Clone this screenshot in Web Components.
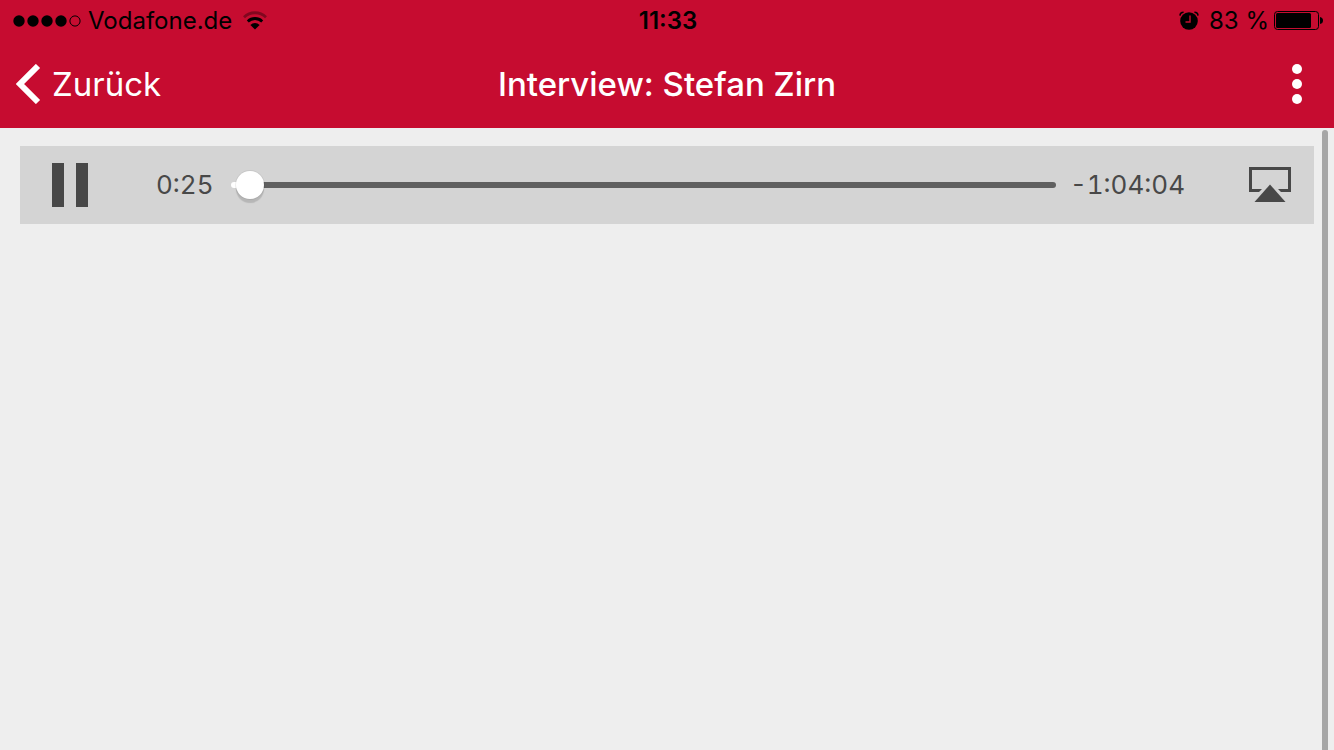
<!DOCTYPE html>
<html lang="de">
<head>
<meta charset="utf-8">
<meta name="viewport" content="width=device-width, initial-scale=1">
<title>Interview: Stefan Zirn</title>
<style>
  html, body {
    height: 100%;
    margin: 0;
  }

  body {
    background: #eee;
    font-family: Inter, "Liberation Sans", sans-serif;
  }
</style>
</head>
<body>
<app-screen>
  <status-bar slot="header" carrier="Vodafone.de" time="11:33" battery="83" signal="4"></status-bar>
  <nav-bar slot="header" back="Zurück">Interview: Stefan Zirn</nav-bar>
  <audio-player position="25" duration="3869"></audio-player>
</app-screen>

<script>
class AppScreen extends HTMLElement {
  constructor() {
    super();
    this.attachShadow({ mode: 'open' });
    this.shadowRoot.innerHTML = `
      <style>
        :host {
          display: flex;
          flex-direction: column;
          height: 100%;
        }

        header {
          background: #c60c30;
        }

        main {
          position: relative;
          flex: 1;
          padding: 18px 20px;
        }

        .scroll-indicator {
          position: absolute;
          top: 2px;
          right: 6px;
          bottom: 0;
          width: 6px;
          border-radius: 3px 3px 0 0;
          background: #a6a6a6;
        }
      </style>

      <header><slot name="header"></slot></header>
      <main>
        <slot></slot>
        <div class="scroll-indicator"></div>
      </main>
    `;
  }
}

/**
 * StatusBar - signal, carrier, clock and battery
 */
class StatusBar extends HTMLElement {
  constructor() {
    super();
    this.attachShadow({ mode: 'open' });
  }

  connectedCallback() {
    const signal = Number(this.getAttribute('signal'));
    const battery = Number(this.getAttribute('battery'));

    let dots = '';
    for (let i = 0; i < 5; i++) {
      const cx = 6 + i * 14;
      dots += i < signal
        ? `<circle cx="${cx}" cy="6" r="5.7"/>`
        : `<circle cx="${cx}" cy="6" r="5.1" fill="none" stroke="#000" stroke-width="1"/>`;
    }

    this.shadowRoot.innerHTML = `
      <style>
        :host {
          display: grid;
          grid-template-columns: 1fr auto 1fr;
          align-items: center;
          height: 42px;
          padding: 0 11px 0 13px;
          color: #000;
          font-size: 24px;
          line-height: 42px;
        }

        svg {
          display: block;
        }

        .left, .right {
          display: flex;
          align-items: center;
        }

        .left {
          gap: 7px;
        }

        .right {
          justify-content: flex-end;
          gap: 5px;
        }

        .wifi {
          margin-left: 4px;
        }

        .alarm {
          margin-right: 5px;
        }

        .time {
          font-weight: 600;
        }
      </style>

      <div class="left">
        <svg width="68" height="12" viewBox="0 0 68 12">${dots}</svg>
        <span>${this.getAttribute('carrier')}</span>
        <svg class="wifi" width="24" height="20" viewBox="0 0 24 20">
          <g fill="none" stroke="#000" stroke-width="2.8">
            <path d="M1 6.2a15.8 15.8 0 0 1 22 0" stroke-opacity=".35"/>
            <path d="M4.8 10.4a10.4 10.4 0 0 1 14.4 0"/>
          </g>
          <path d="M12 18.5l-4.6-4.6a6.6 6.6 0 0 1 9.2 0z"/>
        </svg>
      </div>
      <span class="time">${this.getAttribute('time')}</span>
      <div class="right">
        <svg class="alarm" width="20" height="20" viewBox="0 0 20 20">
          <circle cx="10" cy="10" r="8.8"/>
          <path d="M1 4.6A3.6 3.6 0 0 1 4.6 1.2M19 4.6A3.6 3.6 0 0 0 15.4 1.2" fill="none" stroke="#000" stroke-width="1.6"/>
          <path d="M11 4.5V11H6.5" fill="none" stroke="#c60c30" stroke-width="1.4"/>
        </svg>
        <span>${battery} %</span>
        <svg width="49" height="20" viewBox="0 0 49 20">
          <rect x=".5" y=".5" width="44" height="18" rx="3" fill="none" stroke="#000"/>
          <rect x="2" y="2" width="${Math.round(42 * battery / 100)}" height="15" rx="1.5"/>
          <path d="M46 6q3 .5 3 3.5t-3 3.5z"/>
        </svg>
      </div>
    `;
  }
}

/**
 * NavBar - back button, title and overflow menu button
 */
class NavBar extends HTMLElement {
  constructor() {
    super();
    this.attachShadow({ mode: 'open' });
  }

  connectedCallback() {
    this.shadowRoot.innerHTML = `
      <style>
        :host {
          display: grid;
          grid-template-columns: 1fr auto 1fr;
          align-items: center;
          box-sizing: border-box;
          height: 86px;
          padding: 0 16px 2px;
          color: #fff;
          font-size: 33px;
          line-height: 40px;
        }

        button {
          display: flex;
          align-items: center;
          gap: 11px;
          padding: 0;
          border: 0;
          background: none;
          color: inherit;
          font: inherit;
          cursor: pointer;
        }

        .menu {
          justify-self: end;
          padding: 0 16px;
        }

        h1 {
          margin: 0;
          font-size: inherit;
          font-weight: 500;
        }
      </style>

      <button class="back" type="button">
        <svg width="25" height="40" viewBox="0 0 25 40">
          <path d="M22 2L4 20l18 18" fill="none" stroke="#fff" stroke-width="6"/>
        </svg>
        ${this.getAttribute('back')}
      </button>
      <h1><slot></slot></h1>
      <button class="menu" type="button" aria-label="Menü">
        <svg width="10" height="40" viewBox="0 0 10 40" fill="#fff">
          <circle cx="5" cy="5" r="5"/>
          <circle cx="5" cy="20" r="5"/>
          <circle cx="5" cy="35" r="5"/>
        </svg>
      </button>
    `;
  }
}

/**
 * AudioPlayer - pause button, scrubber and AirPlay button
 */
class AudioPlayer extends HTMLElement {
  constructor() {
    super();
    this.attachShadow({ mode: 'open' });
    this.shadowRoot.innerHTML = `
      <style>
        :host {
          display: flex;
          align-items: center;
          height: 78px;
          padding: 0 23px 0 32px;
          box-sizing: border-box;
          background: #d4d4d4;
          color: #484848;
          font-size: 26px;
          font-variant-numeric: tabular-nums;
          line-height: 30px;
        }

        button {
          padding: 0;
          border: 0;
          background: none;
          color: inherit;
          cursor: pointer;
        }

        svg {
          display: block;
        }

        .elapsed {
          margin-left: 68px;
        }

        .airplay {
          margin-left: 64px;
        }

        input {
          --played: 0%;
          -webkit-appearance: none;
          appearance: none;
          flex: 1;
          min-width: 0;
          height: 28px;
          margin: 0 14px 0 17px;
          background: none;
        }

        input::-webkit-slider-runnable-track {
          height: 6px;
          border-radius: 3px;
          background: linear-gradient(to right, #fff var(--played), #606060 var(--played));
        }

        input::-webkit-slider-thumb {
          -webkit-appearance: none;
          width: 28px;
          height: 28px;
          margin-top: -11px;
          border-radius: 50%;
          background: #fff;
          box-shadow: 0 0 0 1px rgba(0, 0, 0, .06), 0 4px 1px rgba(0, 0, 0, .14);
        }
      </style>

      <button class="pause" type="button" aria-label="Pause">
        <svg width="36" height="44" viewBox="0 0 36 44" fill="currentColor">
          <path d="M0 0h12v44H0zM24 0h12v44H24z"/>
        </svg>
      </button>
      <label class="elapsed" for="seek"></label>
      <input id="seek" type="range" min="0">
      <span class="remaining"></span>
      <button class="airplay" type="button" aria-label="AirPlay">
        <svg width="42" height="36" viewBox="0 0 42 36" fill="currentColor">
          <path d="M0 0h42v25H32l-3-3h10V3H3v19h10l-3 3H0z"/>
          <path d="M21 17.5L36.5 35h-31z"/>
        </svg>
      </button>
    `;

    this.seek = this.shadowRoot.querySelector('input');
    this.elapsed = this.shadowRoot.querySelector('.elapsed');
    this.remaining = this.shadowRoot.querySelector('.remaining');
    this.update = this.update.bind(this);
    this.seek.addEventListener('input', this.update);
  }

  connectedCallback() {
    this.seek.max = this.getAttribute('duration');
    this.seek.value = this.getAttribute('position');
    this.update();
  }

  // Refresh both time labels and the played part of the track
  update() {
    const value = Number(this.seek.value);
    const max = Number(this.seek.max);
    this.elapsed.textContent = this.format(value);
    this.remaining.textContent = '-' + this.format(max - value);
    this.seek.style.setProperty('--played', `calc(14px + (100% - 28px) * ${value / max})`);
  }

  format(total) {
    const h = Math.floor(total / 3600);
    const m = Math.floor(total / 60) % 60;
    const s = String(total % 60).padStart(2, '0');
    return h ? `${h}:${String(m).padStart(2, '0')}:${s}` : `${m}:${s}`;
  }
}

customElements.define('app-screen', AppScreen);
customElements.define('status-bar', StatusBar);
customElements.define('nav-bar', NavBar);
customElements.define('audio-player', AudioPlayer);
</script>
</body>
</html>
